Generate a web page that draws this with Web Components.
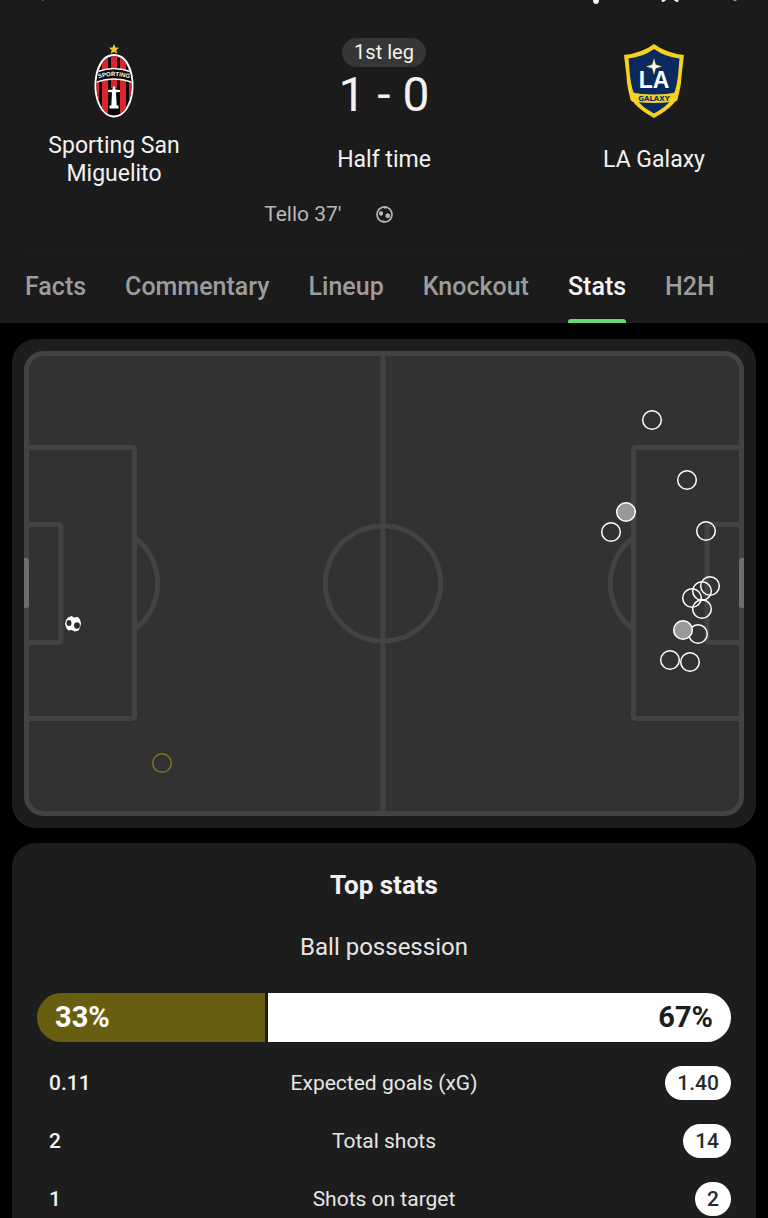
<!DOCTYPE html>
<html lang="en">
<head>
<meta charset="utf-8">
<meta name="viewport" content="width=device-width, initial-scale=1">
<title>Sporting San Miguelito - LA Galaxy</title>
<style>
  html, body { margin: 0; background: #000; }
  body {
    font-family: Roboto, "Liberation Sans", sans-serif;
    color: #f2f2f2;
    height: 100vh;
    overflow: hidden;
  }
</style>
</head>
<body>
<match-page>
  <match-header slot="header">
    <match-team slot="home" name="Sporting San Miguelito"><crest-sporting></crest-sporting></match-team>
    <match-score slot="score" leg="1st leg" score="1 - 0" status="Half time"></match-score>
    <match-team slot="away" name="LA Galaxy"><crest-galaxy></crest-galaxy></match-team>
    <goal-line slot="events">Tello 37'</goal-line>
    <tab-bar slot="tabs" tabs="Facts,Commentary,Lineup,Knockout,Stats,H2H" active="Stats"></tab-bar>
  </match-header>
  <stat-card><shot-map></shot-map></stat-card>
  <stat-card fill>
    <top-stats heading="Top stats">
      <possession-bar home="33" away="67">Ball possession</possession-bar>
      <stats-table></stats-table>
    </top-stats>
  </stat-card>
</match-page>

<script>
class BaseElement extends HTMLElement {
  constructor() {
    super();
    this.shadow = this.attachShadow({mode: 'open'});
  }

  connectedCallback() {
    this.shadow.innerHTML = this.html();
  }

  attr(name) {
    return this.getAttribute(name) || '';
  }
}

class MatchPage extends BaseElement {
  html() {
    return `<style>
      :host { display: flex; flex-direction: column; min-height: 100vh; }
      main { flex: 1; display: flex; flex-direction: column; gap: 15px; padding: 16px 12px 0; }
    </style>
    <slot name="header"></slot>
    <main><slot></slot></main>`;
  }
}
customElements.define('match-page', MatchPage);

class MatchHeader extends BaseElement {
  html() {
    return `<style>
      :host { display: block; background: #1b1b1b; }
      .teams { display: grid; grid-template-columns: 1fr 2fr 1fr; padding: 0 24px; }
      .events { margin: 13px 24px 0; padding-bottom: 26px; border-bottom: 1px solid #1f1f1f; }
    </style>
    <tool-bar></tool-bar>
    <div class="teams">
      <slot name="home"></slot><slot name="score"></slot><slot name="away"></slot>
    </div>
    <div class="events"><slot name="events"></slot></div>
    <slot name="tabs"></slot>`;
  }
}
customElements.define('match-header', MatchHeader);

// scrolled almost out of view, only the lower edge of the icons shows
class ToolBar extends BaseElement {
  html() {
    return `<style>
      :host { display: block; height: 6px; overflow: hidden; }
      nav { height: 100%; display: flex; align-items: flex-end; gap: 44px; padding: 0 27px 0 28px; }
      button { border: 0; padding: 0; background: none; color: #f2f2f2; height: 30px; }
      .grow { flex: 1; }
      svg { display: block; }
    </style>
    <nav>
      <button aria-label="Back"><svg width="30" height="30" viewBox="0 0 30 30"><path d="M24 14H8M15.500 5L7 14l8.500 10" fill="none" stroke="currentColor" stroke-width="2"/></svg></button>
      <span class="grow"></span>
      <button aria-label="Notifications"><svg width="30" height="30" viewBox="0 0 30 30"><path d="M15 3a7 7 0 0 0-7 7v7l-3 3v1h20v-1l-3-3v-7a7 7 0 0 0-7-7zM12 24h6a3 4 0 0 1-6 0z" fill="currentColor"/></svg></button>
      <button aria-label="Favourite"><svg width="30" height="30" viewBox="0 0 30 30"><path d="M15 3l3 8 8 1-6 5 2 7.500-7-5-7 5 2-7.500-6-5 8-1z" fill="none" stroke="currentColor" stroke-width="3" stroke-linejoin="round"/></svg></button>
      <button aria-label="More"><svg width="12" height="30" viewBox="0 0 12 30"><g fill="#aaa"><circle cx="6" cy="7" r="2"/><circle cx="6" cy="15" r="2"/><circle cx="6" cy="23" r="2"/></g></svg></button>
    </nav>`;
  }
}
customElements.define('tool-bar', ToolBar);

class MatchTeam extends BaseElement {
  html() {
    return `<style>
      :host { display: flex; flex-direction: column; align-items: center; padding-top: 38px; }
      .name { height: 56px; margin-top: 14px; display: flex; align-items: center; text-align: center; font-size: 23px; line-height: 28px; }
    </style>
    <slot></slot>
    <div class="name">${this.attr('name')}</div>`;
  }
}
customElements.define('match-team', MatchTeam);

class MatchScore extends BaseElement {
  html() {
    return `<style>
      :host { display: flex; flex-direction: column; align-items: center; padding-top: 32px; }
      .leg { padding: 0 12px; border-radius: 15px; background: #363636; font-size: 20px; line-height: 29px; }
      .score { font-size: 48px; line-height: 56px; }
      .status { margin-top: 23px; font-size: 23px; line-height: 28px; }
    </style>
    <div class="leg">${this.attr('leg')}</div>
    <div class="score">${this.attr('score')}</div>
    <div class="status">${this.attr('status')}</div>`;
  }
}
customElements.define('match-score', MatchScore);

class GoalLine extends BaseElement {
  html() {
    return `<style>
      :host { display: grid; grid-template-columns: 1fr auto 1fr; gap: 34px; align-items: center; color: #b8b8b8; font-size: 21px; line-height: 26px; }
      .home { text-align: right; }
      svg { display: block; }
    </style>
    <span class="home"><slot></slot></span>
    <svg width="17" height="17" viewBox="0 0 17 17" fill="currentColor">
      <circle cx="8.500" cy="8.500" r="7.500" fill="none" stroke="currentColor" stroke-width="1.700"/>
      <path d="M3 6.200l2-1.300 2 1.200v2.400l-2 1.400-1.800-1.200zM9.500 8.500l2.200-1.500 2.400 1.500-.2 2.700-2.500 1-2-1.400z"/>
      <path d="M6 1.200l3 1.600 3-1.300-1.500-1H7zM5 15.500l2.500-1.300 2.500 1.600-2 .6z"/>
    </svg>
    <span></span>`;
  }
}
customElements.define('goal-line', GoalLine);

class TabBar extends BaseElement {
  html() {
    const active = this.attr('active');
    const links = this.attr('tabs').split(',').map(t =>
      `<a href="#${t.toLowerCase()}"${t === active ? ' aria-current="page"' : ''}>${t}</a>`).join('');
    return `<style>
      nav { display: flex; gap: 39px; padding: 0 25px; }
      a { color: #9c9c9c; text-decoration: none; font-size: 25px; font-weight: 500; line-height: 28px; padding: 19px 0 18px; border-bottom: 4px solid transparent; }
      a[aria-current] { position: relative; color: #f5f5f5; }
      a[aria-current]::after { content: ""; position: absolute; left: 0; right: 0; bottom: -4px; height: 4px; border-radius: 3px 3px 0 0; background: #63da73; }
    </style>
    <nav>${links}</nav>`;
  }
}
customElements.define('tab-bar', TabBar);

class CrestSporting extends BaseElement {
  html() {
    return `<style>:host, svg { display: block; }</style>
    <svg width="42" height="74" viewBox="-1 0 42 74" role="img" aria-label="Sporting crest">
      <defs>
        <clipPath id="shield"><path d="M20 12C31 12 37.500 26 37.500 42S30 71.500 20 71.500 2.500 58 2.500 42 9 12 20 12z"/></clipPath>
        <path id="band" d="M1 35.500Q20 28.500 39 35.500"/>
      </defs>
      <path d="M20 0l1.500 3.400 3.600.3-2.700 2.400.8 3.600L20 7.800l-3.200 1.900.8-3.600-2.700-2.400 3.600-.3z" fill="#f2c928"/>
      <path d="M20 10C33 10 39.500 25 39.500 42S31 73.500 20 73.500.5 59 .5 42 7 10 20 10z" fill="#fff"/>
      <g clip-path="url(#shield)">
        <path d="M0 0h40v74H0z" fill="#080808"/>
        <path d="M1 10h4v64H1zM8 10h6v64H8zM17 10h6v34h-6zM26 10h6v64h-6zM35 10h4v64h-4z" fill="#db242c"/>
        <path d="M0 29Q20 20 40 29V39Q20 31 0 39z" fill="#080808" stroke="#fff" stroke-width="1.500"/>
        <path d="M14 46l4.500-.6.500-3h2l.5 3 4.500.6v2l-4 .2.700 13.300h1.800v3h-9v-3h1.800L18 48.200l-4-.2z" fill="#fff"/>
      </g>
      <text fill="#fff" font-family="Liberation Sans" font-size="6" font-weight="700" text-anchor="middle"><textPath href="#band" startOffset="50%">SPORTING</textPath></text>
    </svg>`;
  }
}
customElements.define('crest-sporting', CrestSporting);

class CrestGalaxy extends BaseElement {
  html() {
    return `<style>:host, svg { display: block; }</style>
    <svg width="60" height="74" viewBox="0 0 60 74" role="img" aria-label="LA Galaxy crest">
      <path d="M30 0Q42 9 60 11L57.500 32Q57 50 50 59 43 67 30 74 17 67 10 59 3 50 2.500 32L0 11Q18 9 30 0z" fill="#f4d21f"/>
      <path d="M30 5Q41 13 55.500 14.500L54 32Q52 48 47 56 42 63 30 69.500 18 63 13 56 8 48 6 32L4.500 14.500Q19 13 30 5z" fill="#0a2a5e"/>
      <path d="M30 14l1.800 6.400 6.200 2-6.200 2.100L30 31l-1.800-6.500L22 22.400l6.200-2z" fill="#f7dc78"/>
      <path d="M30 17l1.200 4.200 3.800 1.300-3.800 1.300L30 28l-1.200-4.200-3.800-1.300 3.800-1.300z" fill="#fff"/>
      <text x="30" y="44" fill="#fff" font-family="Liberation Sans" font-size="23" font-weight="700" text-anchor="middle">LA</text>
      <path d="M5 48Q30 53 55 48l-1.500 8Q51 59 47 58 30 60 13 58 9 59 6.500 56z" fill="#f4d21f"/>
      <text x="30" y="57" fill="#0a2a5e" font-family="DejaVu Sans" font-size="7" font-weight="700" text-anchor="middle">GALAXY</text>
    </svg>`;
  }
}
customElements.define('crest-galaxy', CrestGalaxy);

class StatCard extends BaseElement {
  html() {
    return `<style>
      :host { display: block; padding: 12px; border-radius: 24px; background: #1d1d1d; }
      :host([fill]) { flex: 1; padding: 28px 25px 0; border-radius: 24px 24px 0 0; }
    </style>
    <slot></slot>`;
  }
}
customElements.define('stat-card', StatCard);

class ShotMap extends BaseElement {
  constructor() {
    super();
    this.misses = [[628, 69], [663, 129], [587, 181], [682, 180], [686, 235], [678, 240], [668, 247], [678, 258], [674, 283], [646, 309], [666, 311]];
    this.saved = [[602, 161], [659, 279]];
  }

  html() {
    const dots = (list, cls) => list.map(([x, y]) => `<circle class="${cls}" cx="${x}" cy="${y}" r="9.300"/>`).join('');
    return `<style>
      :host, svg { display: block; }
      svg { width: 100%; height: auto; }
      .line { fill: none; stroke: #434343; stroke-width: 5; stroke-linejoin: round; }
      .shot { fill: none; stroke: #fff; stroke-width: 1.500; }
      .saved { fill: #999; stroke: #fff; stroke-width: 1.500; }
      .home { fill: none; stroke: #85751a; stroke-width: 1.500; }
    </style>
    <svg viewBox="0 0 720 465" role="img" aria-label="Shot map">
      <defs>
        <g id="half">
          <path class="line" d="M2 96.500h105.500q3 0 3 3v265q0 3-3 3H2M2 173.500h32q3 0 3 3v112q0 3-3 3H2M112 187.500a57.500 57.500 0 0 1 0 90"/>
          <path d="M0 207h2q3 0 3 3v44q0 3-3 3H0z" fill="#6e6e6e"/>
        </g>
      </defs>
      <rect class="line" x="2.500" y="2.500" width="715" height="460" rx="17" style="fill:#323232"/>
      <path class="line" d="M359 3v459"/>
      <circle class="line" cx="359" cy="232.500" r="57.500"/>
      <use href="#half"/>
      <use href="#half" transform="translate(720 0) scale(-1 1)"/>
      ${dots(this.misses, 'shot')}
      ${dots(this.saved, 'saved')}
      ${dots([[138, 412]], 'home')}
      <g transform="translate(49 273)">
        <path d="M-5-6.500L-1.500-8 1-6.500 5-7l2 2.500 1 4-1 4-1.500 3L2 7.500-1.500 6l-3 .5-2-2L-8 0l1-4z" fill="#fff"/>
        <ellipse cx="-4" cy="-1" rx="2.500" ry="3" fill="#2b2b2b"/>
        <ellipse cx="4" cy="1.500" rx="2.900" ry="3.200" fill="#2b2b2b"/>
      </g>
    </svg>`;
  }
}
customElements.define('shot-map', ShotMap);

class TopStats extends BaseElement {
  html() {
    return `<style>
      :host { display: block; }
      h2 { margin: 0; text-align: center; font-size: 26px; font-weight: 700; line-height: 28px; }
    </style>
    <h2>${this.attr('heading')}</h2>
    <slot></slot>`;
  }
}
customElements.define('top-stats', TopStats);

class PossessionBar extends BaseElement {
  html() {
    const home = this.attr('home');
    const away = this.attr('away');
    return `<style>
      :host { display: block; margin-top: 34px; }
      .label { text-align: center; font-size: 24px; line-height: 28px; color: #e6e6e6; }
      .bar { display: flex; gap: 3px; margin-top: 32px; border-radius: 25px; overflow: hidden; font-size: 29px; font-weight: 700; line-height: 49px; }
      .bar span { flex: 0 1 auto; box-sizing: border-box; padding: 0 18px; }
      .bar .home { width: ${home}%; background: #685e12; color: #fff; }
      .bar .away { width: ${away}%; background: #fff; color: #1d1d1d; text-align: right; }
    </style>
    <div class="label"><slot></slot></div>
    <div class="bar"><span class="home">${home}%</span><span class="away">${away}%</span></div>`;
  }
}
customElements.define('possession-bar', PossessionBar);

class StatsTable extends BaseElement {
  constructor() {
    super();
    this.rows = [
      ['0.11', 'Expected goals (xG)', '1.40'],
      ['2', 'Total shots', '14'],
      ['1', 'Shots on target', '2'],
    ];
  }

  html() {
    const rows = this.rows.map(([home, label, away]) =>
      `<tr><td><span>${home}</span></td><th scope="row">${label}</th><td><span class="lead">${away}</span></td></tr>`).join('');
    return `<style>
      :host { display: block; }
      table { width: 100%; table-layout: fixed; border-spacing: 0 24px; font-size: 21px; line-height: 34px; }
      td, th { padding: 0; }
      th { width: 50%; font-weight: 400; color: #e6e6e6; }
      td { font-weight: 500; }
      td:last-child { text-align: right; }
      span { display: inline-block; vertical-align: top; padding: 0 12px; border-radius: 17px; }
      .lead { background: #fff; color: #2a2a2a; }
    </style>
    <table>${rows}</table>`;
  }
}
customElements.define('stats-table', StatsTable);
</script>
</body>
</html>
